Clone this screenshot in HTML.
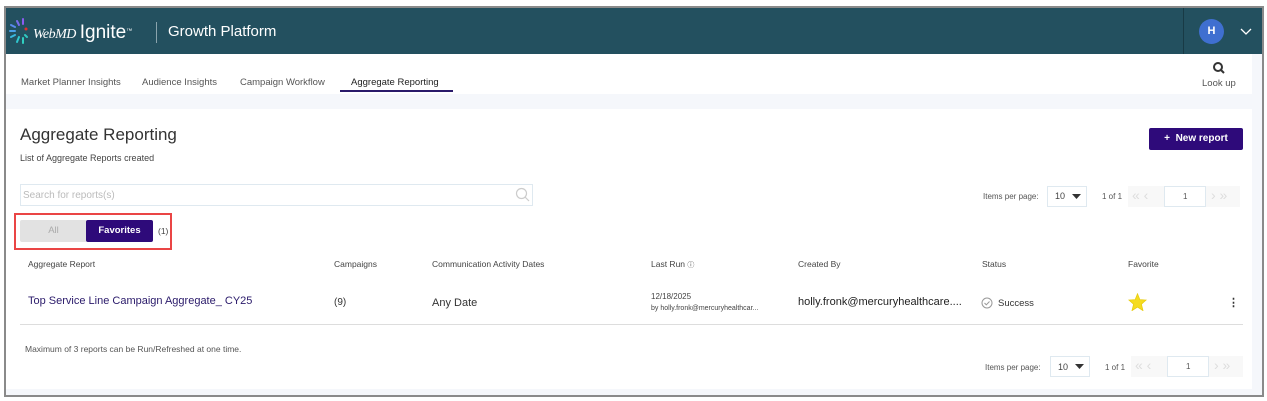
<!DOCTYPE html>
<html><head><meta charset="utf-8"><style>
*{margin:0;padding:0;box-sizing:border-box}
body{width:1267px;height:401px;background:#fff;font-family:"Liberation Sans",sans-serif;position:relative;overflow:hidden;color:#333}
.a{position:absolute;white-space:nowrap}
.frame{position:absolute;left:4px;top:6px;width:1260px;height:391px;border:2px solid #8a8a8a;background:#f5f7fb}
.pg{font-size:8px;color:#555}
.box{position:absolute;border:1px solid #dfe9f0;background:#fff}
.arr{font-size:14px;color:#ddd}
</style></head><body>
<div class="frame"></div>
<div class="a" style="left:6px;top:8px;width:1256px;height:46px;background:#23505f"></div>
<svg class="a" style="left:9px;top:17px" width="20" height="28" viewBox="0 0 20 28">
<g stroke-width="2" stroke-linecap="round">
<line x1="14" y1="2" x2="14" y2="7" stroke="#8a5cf0"/><line x1="8" y1="4" x2="10" y2="8" stroke="#7a6cf0"/>
<line x1="2" y1="8" x2="6" y2="10" stroke="#5a8af0"/><line x1="1" y1="14" x2="6" y2="14" stroke="#4aa0e8"/>
<line x1="2" y1="20" x2="6" y2="18" stroke="#3ab8e0"/><line x1="8" y1="25" x2="10" y2="20" stroke="#30c8d0"/>
<line x1="14" y1="26" x2="14" y2="21" stroke="#30d0c0"/><line x1="18" y1="20" x2="16" y2="18" stroke="#30c8c0"/>
</g><circle cx="17" cy="12" r="1.5" fill="#e03030"/></svg>
<div class="a" style="left:33px;top:22px;font-size:14px;color:#fff"><i style="font-family:'Liberation Serif',serif;letter-spacing:-0.5px">WebMD</i> <span style="font-size:19px">Ignite</span><sup style="font-size:6px">™</sup></div>
<div class="a" style="left:156px;top:22px;width:1px;height:21px;background:#8aa4ad"></div>
<div class="a" style="left:168px;top:23px;font-size:15px;color:#fff">Growth Platform</div>
<div class="a" style="left:1183px;top:8px;width:1px;height:46px;background:#183a45"></div>
<div class="a" style="left:1199px;top:19px;width:25px;height:25px;border-radius:50%;background:#3f6fd0;color:#fff;font-size:11px;font-weight:bold;text-align:center;line-height:25px">H</div>
<svg class="a" style="left:1240px;top:28px" width="12" height="8"><path d="M1 1 L6 6 L11 1" stroke="#fff" stroke-width="1.3" fill="none"/></svg>
<div class="a" style="left:6px;top:54px;width:1246px;height:40px;background:#fff"></div>
<div class="a" style="left:21px;top:77px;font-size:9.5px;color:#555">Market Planner Insights</div>
<div class="a" style="left:142px;top:77px;font-size:9.5px;color:#555">Audience Insights</div>
<div class="a" style="left:240px;top:77px;font-size:9.5px;color:#555">Campaign Workflow</div>
<div class="a" style="left:351px;top:77px;font-size:9.5px;color:#222">Aggregate Reporting</div>
<div class="a" style="left:340px;top:90px;width:113px;height:2px;background:#2a1a6a"></div>
<svg class="a" style="left:1212px;top:61px" width="14" height="14"><circle cx="6" cy="6" r="4" stroke="#333" stroke-width="2" fill="none"/><line x1="9" y1="9" x2="12" y2="12" stroke="#333" stroke-width="2"/></svg>
<div class="a" style="left:1202px;top:78px;font-size:9.5px;color:#555">Look up</div>
<div class="a" style="left:6px;top:109px;width:1246px;height:280px;background:#fff"></div>
<div class="a" style="left:20px;top:125px;font-size:17px;color:#333">Aggregate Reporting</div>
<div class="a" style="left:20px;top:153px;font-size:9px;color:#444">List of Aggregate Reports created</div>
<div class="a" style="left:1149px;top:128px;width:94px;height:22px;background:#2e0a7a;border-radius:2px;color:#fff;font-size:10px;font-weight:bold;text-align:center;line-height:22px">+&nbsp; New report</div>
<div class="box" style="left:20px;top:184px;width:513px;height:22px"></div>
<div class="a" style="left:23px;top:190px;font-size:10px;color:#bbb">Search for reports(s)</div>
<svg class="a" style="left:515px;top:187px" width="15" height="15"><circle cx="6.5" cy="6.5" r="5" stroke="#ccc" stroke-width="1.2" fill="none"/><line x1="10" y1="10" x2="14" y2="14" stroke="#ccc" stroke-width="1.2"/></svg>
<div class="a pg" style="left:983px;top:192px">Items per page:</div>
<div class="box" style="left:1047px;top:186px;width:40px;height:21px"></div>
<div class="a" style="left:1055px;top:191px;font-size:9px;color:#444">10</div>
<svg class="a" style="left:1072px;top:194px" width="9" height="6"><path d="M0 0H9L4.5 5Z" fill="#333"/></svg>
<div class="a pg" style="left:1102px;top:192px">1 of 1</div>
<div class="a" style="left:1128px;top:186px;width:112px;height:21px;background:#f8f8f8"></div>
<div class="a arr" style="left:1132px;top:187px">«&nbsp;‹</div>
<div class="box" style="left:1164px;top:186px;width:42px;height:21px"></div>
<div class="a pg" style="left:1183px;top:192px">1</div>
<div class="a arr" style="left:1211px;top:187px">›&nbsp;»</div>
<div class="a" style="left:14px;top:213px;width:158px;height:37px;border:2px solid #ea4545"></div>
<div class="a" style="left:20px;top:220px;width:67px;height:22px;background:#e2e2e2;border-radius:2px;color:#aaa;font-size:9.5px;text-align:center;line-height:22px">All</div>
<div class="a" style="left:86px;top:220px;width:67px;height:22px;background:#2e0a7a;border-radius:2px;color:#fff;font-size:9.5px;font-weight:bold;text-align:center;line-height:22px">Favorites</div>
<div class="a" style="left:158px;top:226px;font-size:8.5px;color:#444">(1)</div>
<div class="a" style="left:28px;top:259px;font-size:8.5px;color:#444">Aggregate Report</div>
<div class="a" style="left:334px;top:259px;font-size:8.5px;color:#444">Campaigns</div>
<div class="a" style="left:432px;top:259px;font-size:8.5px;color:#444">Communication Activity Dates</div>
<div class="a" style="left:651px;top:259px;font-size:8.5px;color:#444">Last Run <span style="font-size:7px">ⓘ</span></div>
<div class="a" style="left:798px;top:259px;font-size:8.5px;color:#444">Created By</div>
<div class="a" style="left:982px;top:259px;font-size:8.5px;color:#444">Status</div>
<div class="a" style="left:1128px;top:259px;font-size:8.5px;color:#444">Favorite</div>
<div class="a" style="left:28px;top:295px;font-size:11px;color:#2a1a6a">Top Service Line Campaign Aggregate_ CY25</div>
<div class="a" style="left:334px;top:297px;font-size:10px;color:#333">(9)</div>
<div class="a" style="left:432px;top:297px;font-size:11px;color:#333">Any Date</div>
<div class="a" style="left:651px;top:292px;font-size:8px;color:#444">12/18/2025</div>
<div class="a" style="left:651px;top:305px;font-size:7px;color:#444">by holly.fronk@mercuryhealthcar...</div>
<div class="a" style="left:798px;top:296px;font-size:11px;color:#222">holly.fronk@mercuryhealthcare....</div>
<svg class="a" style="left:981px;top:297px" width="12" height="12"><circle cx="6" cy="6" r="5" stroke="#999" fill="none"/><path d="M3.5 6L5.3 7.8L8.5 4.5" stroke="#999" fill="none"/></svg>
<div class="a" style="left:998px;top:298px;font-size:9.5px;color:#333">Success</div>
<svg class="a" style="left:1128px;top:293px" width="19" height="18" viewBox="0 0 24 23"><path d="M12 1L15 8.5L23 9L17 14.3L19 22.5L12 18L5 22.5L7 14.3L1 9L9 8.5Z" fill="#f5dc20" stroke="#e8cc10"/></svg>
<div class="a" style="left:1228px;top:296px;font-size:11px;color:#333;font-weight:bold">⋮</div>
<div class="a" style="left:20px;top:324px;width:1223px;height:1px;background:#ddd"></div>
<div class="a" style="left:25px;top:344px;font-size:8.5px;color:#555">Maximum of 3 reports can be Run/Refreshed at one time.</div>
<div class="a pg" style="left:985px;top:363px">Items per page:</div>
<div class="box" style="left:1050px;top:356px;width:40px;height:21px"></div>
<div class="a" style="left:1058px;top:362px;font-size:9px;color:#444">10</div>
<svg class="a" style="left:1075px;top:364px" width="9" height="6"><path d="M0 0H9L4.5 5Z" fill="#333"/></svg>
<div class="a pg" style="left:1105px;top:363px">1 of 1</div>
<div class="a" style="left:1131px;top:356px;width:112px;height:21px;background:#f8f8f8"></div>
<div class="a arr" style="left:1135px;top:357px">«&nbsp;‹</div>
<div class="box" style="left:1167px;top:356px;width:42px;height:21px"></div>
<div class="a pg" style="left:1186px;top:362px">1</div>
<div class="a arr" style="left:1214px;top:357px">›&nbsp;»</div>
</body></html>
